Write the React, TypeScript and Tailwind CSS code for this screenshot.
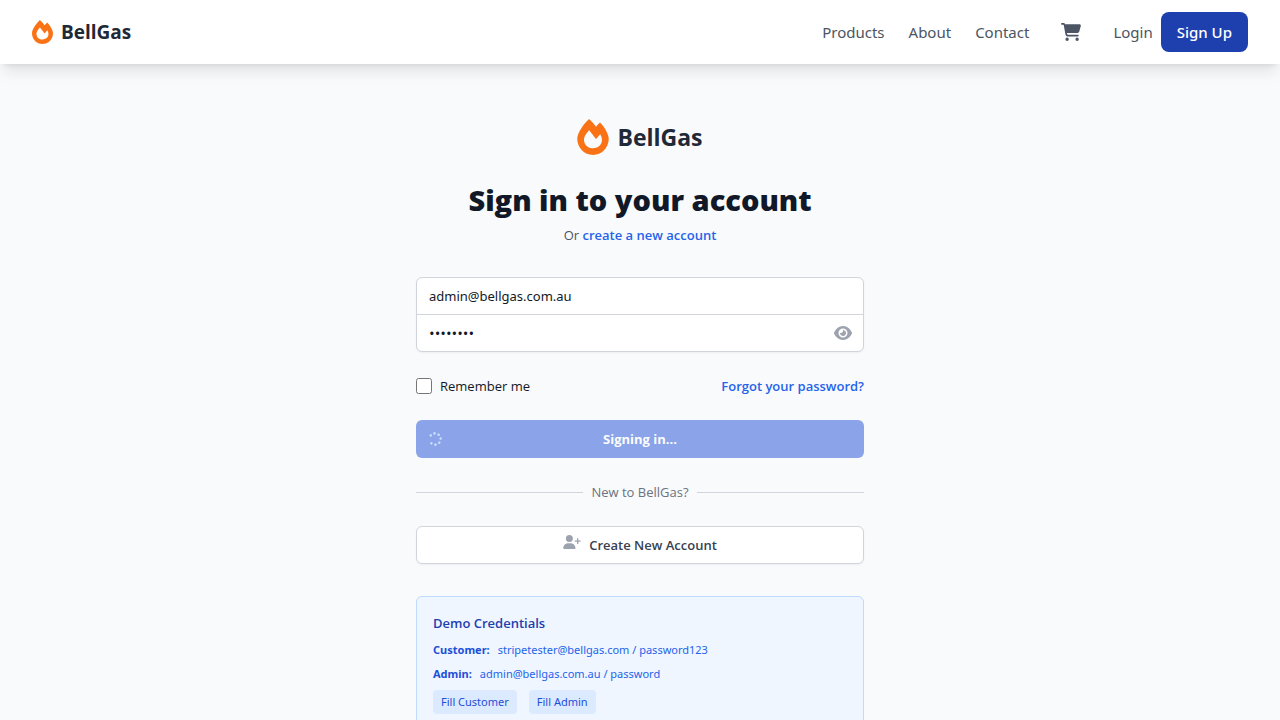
import { useState } from "react";
import { FaFireAlt } from "react-icons/fa";
import { FaCartShopping, FaEye, FaSpinner, FaUserPlus } from "react-icons/fa6";

const navLinks = ["Products", "About", "Contact"];

const demoAccounts = [
  { role: "Customer", email: "stripetester@bellgas.com", password: "password123" },
  { role: "Admin", email: "admin@bellgas.com.au", password: "password" },
];

function Header() {
  return (
    <header className="relative bg-white shadow-[0_10px_15px_-3px_rgba(0,0,0,0.1),0_4px_6px_-4px_rgba(0,0,0,0.1)]">
      <nav className="flex h-16 items-center justify-between px-8 font-['Noto_Sans',sans-serif] text-[15px] text-[#4b5563]">
        <a href="#home" className="flex items-center gap-2 font-['Open_Sans',sans-serif]">
          <FaFireAlt className="h-6 w-[21px] text-[#f97316]" />
          <span className="text-[19px] font-bold text-[#1f2937]">BellGas</span>
        </a>
        <div className="flex items-center gap-6">
          {navLinks.map((label) => (
            <a key={label} href={`#${label.toLowerCase()}`}>
              {label}
            </a>
          ))}
          <button type="button" aria-label="Cart" className="p-2">
            <FaCartShopping className="h-[18px] w-5" />
          </button>
          <div className="flex items-center gap-2">
            <a href="#login">Login</a>
            <a
              href="#signup"
              className="flex h-10 items-center rounded-lg bg-[#1e40af] px-4 font-medium text-white"
            >
              Sign Up
            </a>
          </div>
        </div>
      </nav>
    </header>
  );
}

export default function App() {
  const [email, setEmail] = useState("admin@bellgas.com.au");
  const [password, setPassword] = useState("password");
  const [visible, setVisible] = useState(false);

  const fill = (index: number) => {
    setEmail(demoAccounts[index].email);
    setPassword(demoAccounts[index].password);
  };

  return (
    <div className="min-h-screen bg-[#f9fafb] font-['Open_Sans',sans-serif]">
      <Header />
      <main className="mx-auto w-full max-w-md py-12 text-[13px] leading-5">
        <div className="flex h-[46px] items-center justify-center gap-2 pt-1">
          <FaFireAlt className="h-9 w-8 text-[#f97316]" />
          <span className="text-[23px] leading-8 font-bold text-[#1f2937]">BellGas</span>
        </div>
        <h1 className="mt-6 text-center text-[29px] leading-9 font-extrabold text-[#111827]">
          Sign in to your account
        </h1>
        <p className="mt-[7px] text-center text-[#4b5563]">
          Or{" "}
          <a href="#register" className="font-semibold text-[#2563eb]">
            create a new account
          </a>
        </p>

        <form className="mt-8 flex flex-col gap-6" onSubmit={(e) => e.preventDefault()}>
          <div className="divide-y divide-[#d1d5db] overflow-hidden rounded-md border border-[#d1d5db] bg-white text-[#111827] shadow-[0_1px_2px_rgba(0,0,0,0.05)]">
            <input
              type="email"
              aria-label="Email address"
              value={email}
              onChange={(e) => setEmail(e.target.value)}
              className="block h-[37px] w-full px-3 font-['Noto_Sans',sans-serif] outline-none"
            />
            <div className="flex h-9 items-center">
              <input
                type={visible ? "text" : "password"}
                aria-label="Password"
                value={password}
                onChange={(e) => setPassword(e.target.value)}
                className="h-full min-w-0 flex-1 px-3 text-[15px] outline-none"
              />
              <button
                type="button"
                aria-label="Show password"
                onClick={() => setVisible(!visible)}
                className="px-[11px] text-[#9ca3af]"
              >
                <FaEye className="h-4 w-[18px]" />
              </button>
            </div>
          </div>

          <div className="flex items-center justify-between">
            <label className="flex items-center gap-2 text-[#111827]">
              <input type="checkbox" className="size-4" />
              Remember me
            </label>
            <a href="#forgot" className="font-semibold text-[#2563eb]">
              Forgot your password?
            </a>
          </div>

          <button
            type="submit"
            disabled
            className="relative h-[38px] rounded-md bg-[#1d4ed8] font-bold text-white opacity-50"
          >
            <FaSpinner className="absolute top-3 left-3 size-3.5 -rotate-[140deg] text-[#93c5fd]" />
            Signing in...
          </button>
        </form>

        <div className="mt-6 flex items-center gap-2 text-[#6b7280]">
          <div className="h-px flex-1 bg-[#d1d5db]" />
          New to BellGas?
          <div className="h-px flex-1 bg-[#d1d5db]" />
        </div>

        <a
          href="#register"
          className="mt-6 flex h-[38px] items-center justify-center gap-2 rounded-md border border-[#d1d5db] bg-white font-semibold text-[#374151] shadow-[0_1px_2px_rgba(0,0,0,0.05)]"
        >
          <FaUserPlus className="mb-1.5 h-3.5 w-[18px] text-[#9ca3af]" />
          Create New Account
        </a>

        <section className="mt-8 rounded-md border border-[#bfdbfe] bg-[#eff6ff] p-4">
          <h2 className="font-semibold text-[#1e40af]">Demo Credentials</h2>
          <div className="mt-[9px] flex flex-col gap-2 font-['Noto_Sans',sans-serif] text-[11px] leading-4 text-[#2563eb]">
            {demoAccounts.map((account) => (
              <p key={account.role} className="flex gap-2">
                <strong className="font-bold text-[#1d4ed8]">{account.role}:</strong>
                {account.email} / {account.password}
              </p>
            ))}
            <div className="flex gap-3 text-[#1d4ed8]">
              {demoAccounts.map((account, index) => (
                <button
                  key={account.role}
                  type="button"
                  onClick={() => fill(index)}
                  className="rounded bg-[#dbeafe] px-2 py-1"
                >
                  Fill {account.role}
                </button>
              ))}
            </div>
          </div>
        </section>
      </main>
    </div>
  );
}
